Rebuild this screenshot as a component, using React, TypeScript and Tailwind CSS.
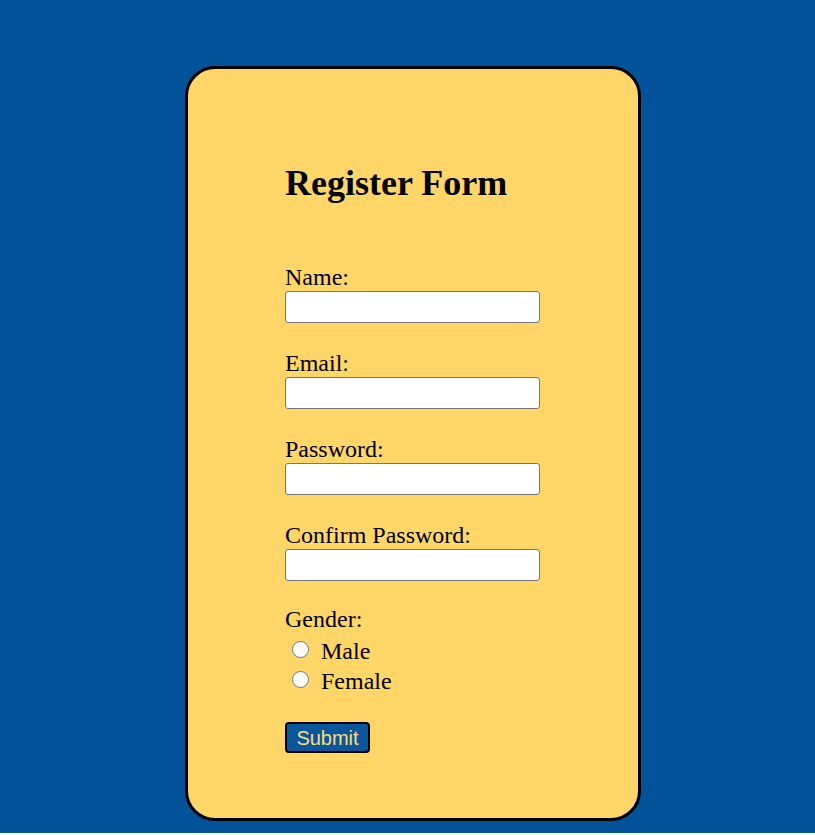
const fields = ['Name:', 'Email:', 'Password:', 'Confirm Password:'];

export default function App() {
  return (
    <div className="h-[833px] bg-[#02539a] flex justify-center pl-[11px] pt-[66px] font-['Liberation_Serif',serif] text-black">
      <div className="w-[456px] h-[755px] bg-[#ffd667] border-[3px] border-black rounded-[30px] pl-[97px] pt-[94px]">
        <h1 className="text-[36px] leading-[41px] font-bold">Register Form</h1>

        <form className="mt-[59px] flex flex-col gap-[26px]" onSubmit={(e) => e.preventDefault()}>
          {fields.map((label) => (
            <div key={label} className="flex flex-col">
              <label className="text-[24px] leading-[28px]">{label}</label>
              <input
                type={label.includes('Password') ? 'password' : 'text'}
                className="w-[255px] h-[32px] bg-white border border-[#767676] rounded-[3px] px-2 outline-none"
              />
            </div>
          ))}

          <div className="flex flex-col -mt-[2px]">
            <span className="text-[24px] leading-[28px] mb-[3px]">Gender:</span>
            {['Male', 'Female'].map((g) => (
              <label key={g} className="flex items-center h-[30px] text-[24px]">
                <input
                  type="radio"
                  name="gender"
                  className="appearance-none w-[17px] h-[17px] rounded-full border border-[#767676] bg-white ml-[7px] mr-[12px] -mt-[4px]"
                />
                {g}
              </label>
            ))}
          </div>

          <div>
            <button
              type="submit"
              className="w-[85px] h-[31px] bg-[#0a569c] text-[#ffdc7a] border-2 border-black rounded-[4px] font-['Liberation_Sans',sans-serif] text-[20px] leading-none"
            >
              Submit
            </button>
          </div>
        </form>
      </div>
    </div>
  );
}
